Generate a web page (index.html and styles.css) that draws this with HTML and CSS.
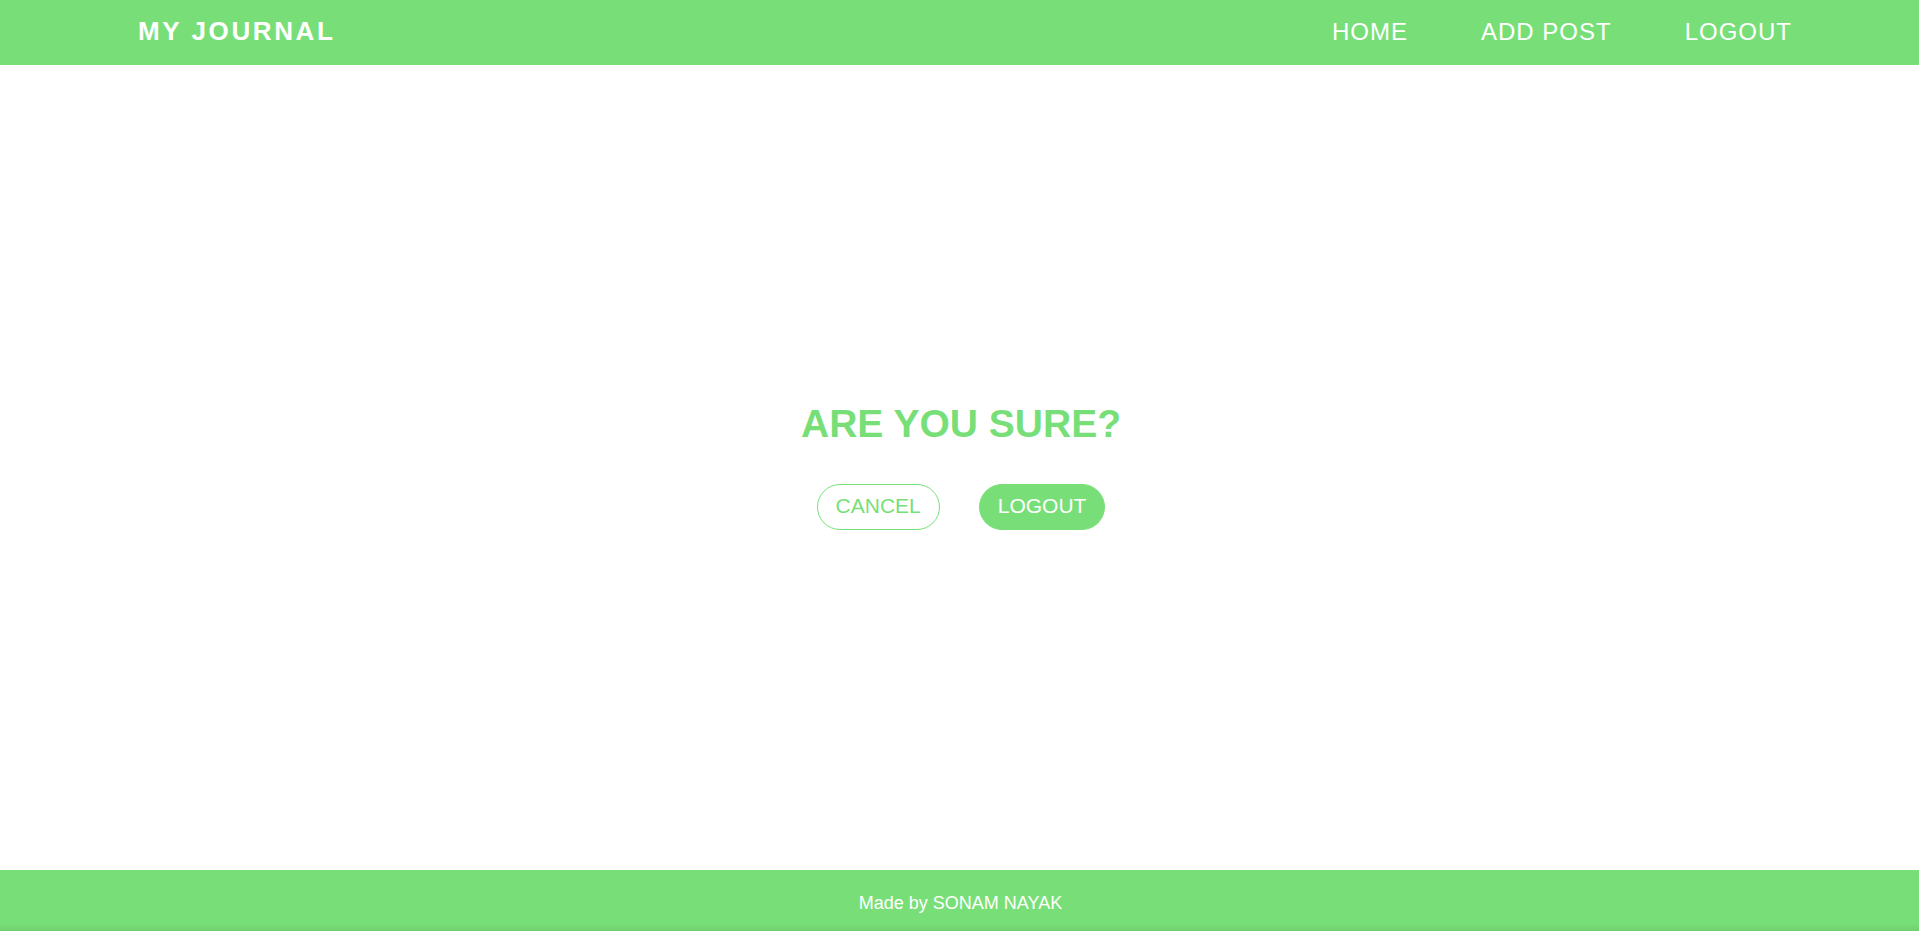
FILE: index.html
```html
<!DOCTYPE html>
<html lang="en">
<head>
<meta charset="utf-8">
<title>My Journal</title>
<link rel="stylesheet" href="styles.css">
</head>
<body class="page">
<header class="header">
<a class="brand" href="#">MY JOURNAL</a>
<nav class="nav">
<a class="nav-link" href="#">HOME</a>
<a class="nav-link" href="#">ADD POST</a>
<a class="nav-link" href="#">LOGOUT</a>
</nav>
</header>
<main class="main">
<h1 class="title">ARE YOU SURE?</h1>
<div class="actions">
<button class="button" type="button">CANCEL</button>
<button class="button button-primary" type="button">LOGOUT</button>
</div>
</main>
<footer class="footer">Made by SONAM NAYAK</footer>
</body>
</html>
```
FILE: styles.css
```css
* {
  box-sizing: border-box;
}

.page {
  display: flex;
  flex-direction: column;
  min-height: 100vh;
  margin: 0;
  background: #fff;
  color: #78df78;
  font-family: "Liberation Sans", Arial, sans-serif;
}

.header {
  display: flex;
  align-items: center;
  justify-content: space-between;
  padding: 17px 127px 19px 138px;
  background: #78df78;
}

.brand,
.nav-link {
  color: #fff;
  line-height: 29px;
  text-decoration: none;
}

.brand {
  font-size: 26px;
  font-weight: bold;
  letter-spacing: 0.1em;
}

.nav {
  display: flex;
  gap: 73px;
}

.nav-link {
  font-size: 24px;
  letter-spacing: 1px;
}

.main {
  display: flex;
  flex: 1;
  flex-direction: column;
  align-items: center;
  justify-content: center;
  gap: 37px;
  padding: 0 0 4px 3px;
}

.title {
  margin: 0;
  font-size: 39px;
  line-height: 46px;
}

.actions {
  display: flex;
  gap: 39px;
}

.button {
  padding: 9px 18px 11px;
  border: 1px solid #78df78;
  border-radius: 24px;
  background: #fff;
  color: #78df78;
  font-family: inherit;
  font-size: 21px;
  line-height: 24px;
}

.button-primary {
  background: #78df78;
  color: #fff;
}

.footer {
  padding: 23px 18px 17px 20px;
  background: linear-gradient(to top, #6fcf6f, #78df78 8px);
  color: #fff;
  font-size: 18px;
  line-height: 21px;
  text-align: center;
}
```
